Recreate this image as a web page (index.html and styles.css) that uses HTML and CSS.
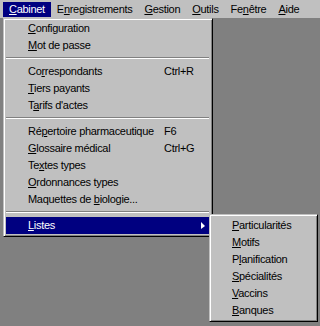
FILE: index.html
```html
<!DOCTYPE html>
<html>
<head>
    <title>Cabinet</title>
    <link rel="stylesheet" href="styles.css">
</head>
<body>
    <div class="menubar">
        <span class="menu-title active"><u>C</u>abinet</span>
        <span class="menu-title">E<u>n</u>registrements</span>
        <span class="menu-title"><u>G</u>estion</span>
        <span class="menu-title"><u>O</u>utils</span>
        <span class="menu-title">Fe<u>n</u>être</span>
        <span class="menu-title"><u>A</u>ide</span>
    </div>
    <div class="workspace"></div>

    <div class="dropdown">
        <div class="item"><span class="label"><u>C</u>onfiguration</span></div>
        <div class="item"><span class="label"><u>M</u>ot de passe</span></div>
        <div class="separator"></div>
        <div class="item"><span class="label">Co<u>r</u>respondants</span><span class="key">Ctrl+R</span></div>
        <div class="item"><span class="label"><u>T</u>iers payants</span></div>
        <div class="item"><span class="label">T<u>a</u>rifs d'actes</span></div>
        <div class="separator"></div>
        <div class="item"><span class="label">Ré<u>p</u>ertoire pharmaceutique</span><span class="key">F6</span></div>
        <div class="item"><span class="label"><u>G</u>lossaire médical</span><span class="key">Ctrl+G</span></div>
        <div class="item"><span class="label">Te<u>x</u>tes types</span></div>
        <div class="item"><span class="label"><u>O</u>rdonnances types</span></div>
        <div class="item"><span class="label">Maquettes de <u>b</u>iologie...</span></div>
        <div class="separator"></div>
        <div class="item selected"><span class="label"><u>L</u>istes</span><span class="arrow"></span></div>
    </div>

    <div class="submenu">
        <div class="item"><span class="label"><u>P</u>articularités</span></div>
        <div class="item"><span class="label"><u>M</u>otifs</span></div>
        <div class="item"><span class="label">P<u>l</u>anification</span></div>
        <div class="item"><span class="label"><u>S</u>pécialités</span></div>
        <div class="item"><span class="label"><u>V</u>accins</span></div>
        <div class="item"><span class="label"><u>B</u>anques</span></div>
    </div>
</body>
</html>
```

FILE: styles.css
```css
body {
    margin: 0;
    height: 326px;
    display: flex;
    flex-direction: column;
    background: #808080;
    font-family: "Liberation Sans", Arial, sans-serif;
    font-size: 11px;
    letter-spacing: -0.3px;
    color: #000;
    overflow: hidden;
}

u {
    text-decoration: underline;
    text-underline-offset: 1px;
}

.menubar {
    height: 18px;
    box-sizing: border-box;
    padding: 2px 0 1px 3px;
    display: flex;
    background: #c0c0c0;
}

.menu-title {
    height: 15px;
    line-height: 15px;
    padding: 0 6px;
}

.menu-title.active {
    background: #000080;
    color: #fff;
}

.workspace {
    flex: 1;
}

/* popup menus, win95 style raised edge */
.dropdown,
.submenu {
    position: absolute;
    box-sizing: border-box;
    background: #c0c0c0;
    border: 1px solid;
    border-color: #c0c0c0 #000 #000 #c0c0c0;
    box-shadow: inset 1px 1px #fff, inset -1px -1px #808080;
}

.dropdown {
    left: 3px;
    top: 18px;
    width: 210px;
    height: 219px;
    padding: 1px 3px 2px 2px;
}

.submenu {
    left: 209px;
    top: 214px;
    width: 109px;
    height: 108px;
    padding: 2px;
}

.item {
    height: 17px;
    line-height: 17px;
    display: flex;
    align-items: center;
    padding-left: 22px;
}

.submenu .item {
    padding-left: 20px;
}

.item .label {
    width: 136px;
    white-space: nowrap;
}

.item.selected {
    background: #000080;
    color: #fff;
}

.arrow {
    margin-left: auto;
    margin-right: 4px;
    width: 0;
    height: 0;
    border-top: 4px solid transparent;
    border-bottom: 3px solid transparent;
    border-left: 4px solid #fff;
}

.separator {
    height: 9px;
    box-sizing: border-box;
    padding-top: 3px;
}

.separator::before {
    content: "";
    display: block;
    border-top: 1px solid #808080;
    border-bottom: 1px solid #fff;
}
```
